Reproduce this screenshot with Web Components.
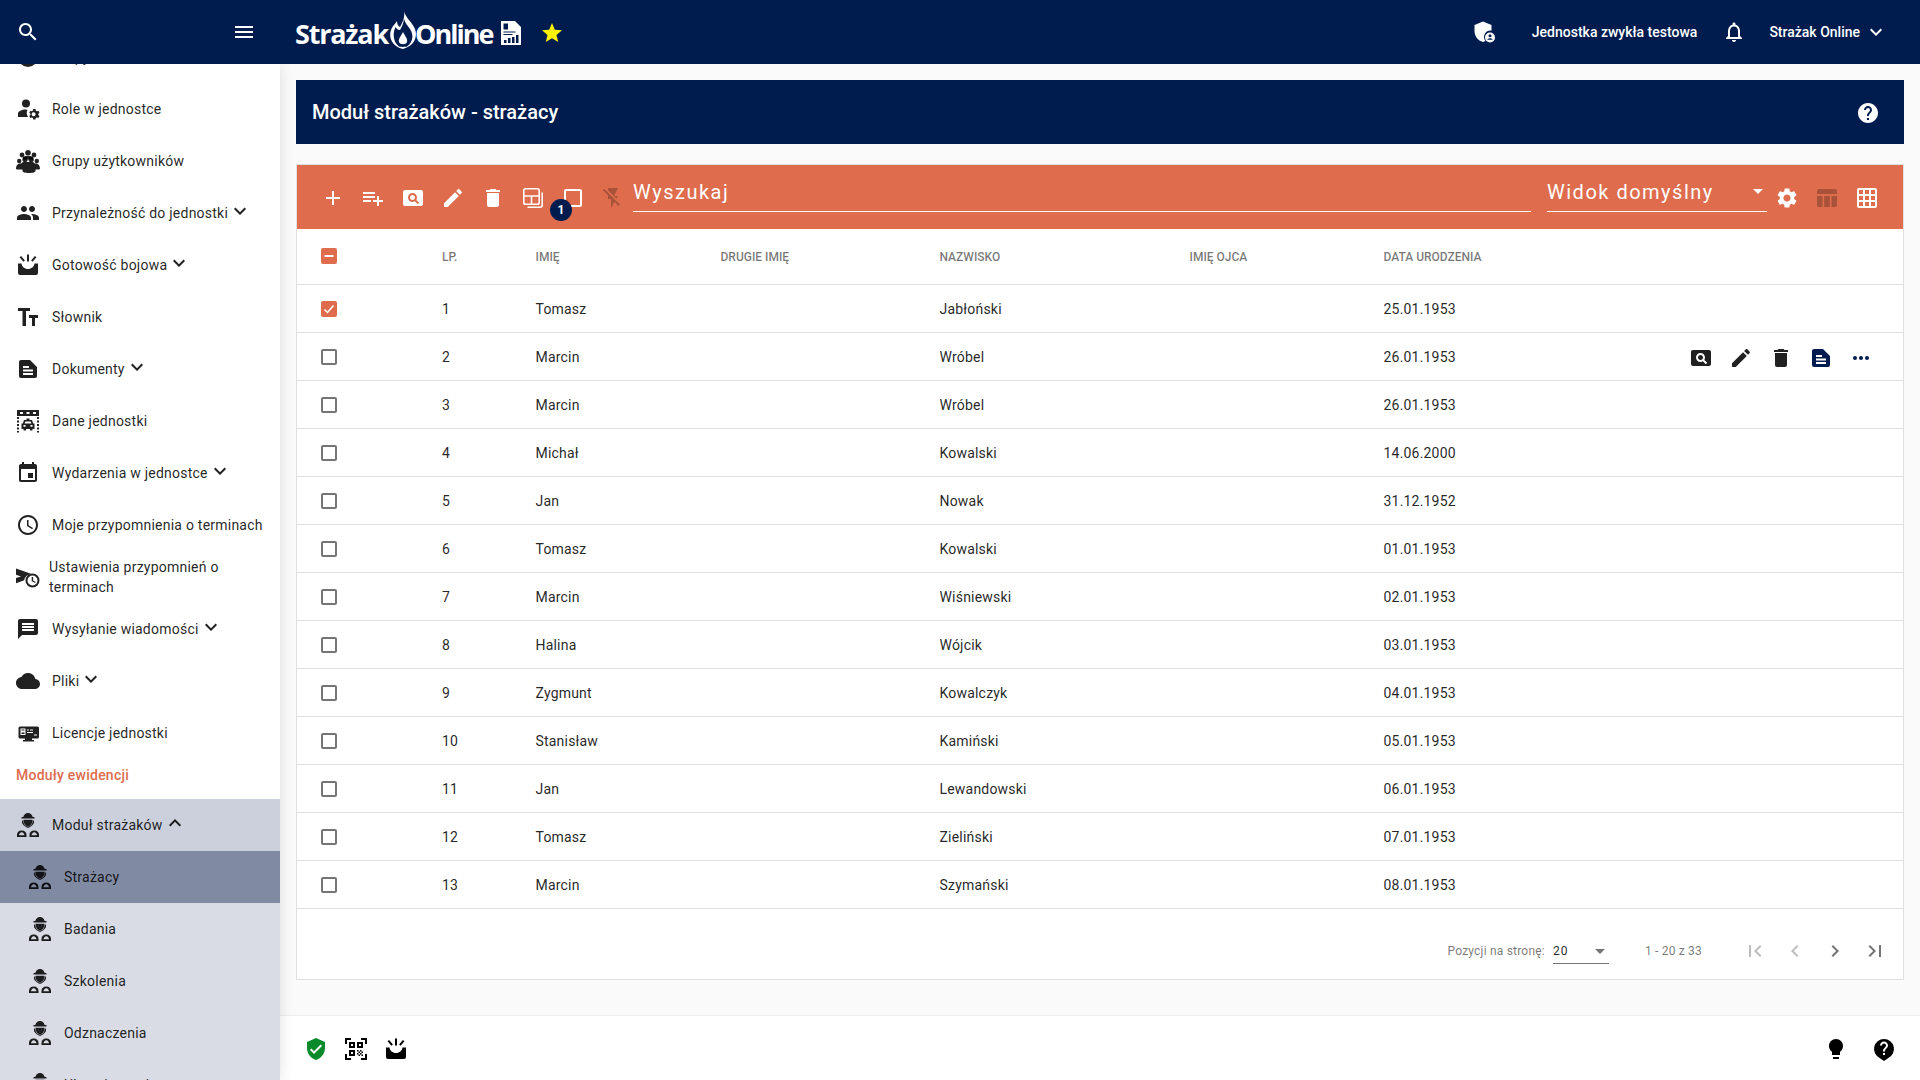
<!DOCTYPE html>
<html lang="pl">
<head>
<meta charset="utf-8">
<title>Strażak Online</title>
<style>
  html, body { margin: 0; height: 100%; }
  body { font-family: Roboto, "Liberation Sans", sans-serif; font-size: 14px; color: rgba(0, 0, 0, .87); overflow: hidden; }
</style>
</head>
<body>
<app-shell></app-shell>

<script>
/**
 * Icon shapes, all of them on a 24x24 grid.
 */
const ICONS = {
  search: '<path d="M15.5 14h-.79l-.28-.27C15.41 12.59 16 11.11 16 9.5 16 5.91 13.09 3 9.5 3S3 5.91 3 9.5 5.91 16 9.5 16c1.61 0 3.09-.59 4.23-1.57l.27.28v.79l5 4.99L20.49 19l-4.99-5zm-6 0C7.01 14 5 11.99 5 9.5S7.01 5 9.5 5 14 7.01 14 9.5 11.99 14 9.5 14z"/>',
  menu: '<path d="M3 18h18v-2H3v2zm0-5h18v-2H3v2zm0-7v2h18V6H3z"/>',
  star: '<path d="M12 17.27L18.18 21l-1.64-7.03L22 9.24l-7.19-.61L12 2 9.19 8.63 2 9.24l5.46 4.73L5.82 21z"/>',
  add: '<path d="M19 13h-6v6h-2v-6H5v-2h6V5h2v6h6v2z"/>',
  playlistAdd: '<path d="M14 10H2v2h12v-2zm0-4H2v2h12V6zm4 8v-4h-2v4h-4v2h4v4h2v-4h4v-2h-4zM2 16h8v-2H2v2z"/>',
  pageview: '<path d="M11.5 9C10.12 9 9 10.12 9 11.5s1.12 2.5 2.5 2.5 2.5-1.12 2.5-2.5S12.88 9 11.5 9zM20 4H4c-1.1 0-2 .9-2 2v12c0 1.1.9 2 2 2h16c1.1 0 2-.9 2-2V6c0-1.1-.9-2-2-2zm-3.21 14.21l-2.91-2.91c-.69.44-1.51.7-2.39.7C9.01 16 7 13.99 7 11.5S9.01 7 11.5 7 16 9.01 16 11.5c0 .88-.26 1.69-.7 2.39l2.91 2.9-1.42 1.42z"/>',
  edit: '<path d="M3 17.25V21h3.75L17.81 9.94l-3.75-3.75L3 17.25zM20.71 7.04c.39-.39.39-1.02 0-1.41l-2.34-2.34c-.39-.39-1.02-.39-1.41 0l-1.83 1.83 3.75 3.75 1.83-1.83z"/>',
  trash: '<path d="M6 19c0 1.1.9 2 2 2h8c1.1 0 2-.9 2-2V7H6v12zM19 4h-3.5l-1-1h-5l-1 1H5v2h14V4z"/>',
  panes: '<g fill="none" stroke="currentColor" stroke-width="1.6"><rect x="2.8" y="2.800" width="15.400" height="15.400" rx="1.800"/><path d="M2.800 10h15.400M10.500 10v8.200"/><path d="M21.200 6.500v13a1.800 1.800 0 0 1-1.800 1.800H6.500"/></g>',
  box: '<path d="M19 5v14H5V5h14m0-2H5c-1.100 0-2 .9-2 2v14c0 1.100.9 2 2 2h14c1.100 0 2-.9 2-2V5c0-1.100-.9-2-2-2z"/>',
  flashOff: '<path d="M3.270 3L2 4.270l5 5V13h3v9l3.580-6.140L17.730 20 19 18.730 3.270 3zM17 10h-4l4-8H7v2.180l8.460 8.460L17 10z"/>',
  gear: '<path d="M19.140 12.940c.04-.3.06-.61.06-.94 0-.32-.02-.64-.07-.94l2.030-1.580c.18-.14.23-.41.12-.61l-1.920-3.320c-.12-.22-.37-.29-.59-.22l-2.390.96c-.5-.38-1.030-.7-1.620-.94l-.36-2.540c-.04-.24-.24-.41-.48-.41h-3.840c-.24 0-.43.17-.47.41l-.36 2.540c-.59.24-1.130.57-1.620.94l-2.390-.96c-.22-.08-.47 0-.59.22L2.740 8.870c-.12.21-.08.47.12.61l2.030 1.580c-.05.3-.09.63-.09.94s.02.64.07.94l-2.030 1.580c-.18.14-.23.41-.12.61l1.920 3.320c.12.22.37.29.59.22l2.390-.96c.5.38 1.030.7 1.620.94l.36 2.540c.05.24.24.41.48.41h3.840c.24 0 .44-.17.47-.41l.36-2.540c.59-.24 1.130-.56 1.620-.94l2.390.96c.22.08.47 0 .59-.22l1.920-3.320c.12-.22.07-.47-.12-.61l-2.010-1.580zM12 15.600c-1.980 0-3.600-1.620-3.600-3.600s1.620-3.600 3.600-3.600 3.600 1.620 3.600 3.600-1.620 3.600-3.600 3.600z"/>',
  tableView: '<path d="M4 3h16a2 2 0 0 1 2 2v3H2V5a2 2 0 0 1 2-2zM2 10h5.500v11H4a2 2 0 0 1-2-2zM9.200 10h5.600v11H9.200zM16.500 10H22v9a2 2 0 0 1-2 2h-3.500z"/>',
  grid: '<path d="M20 2H4c-1.100 0-2 .9-2 2v16c0 1.100.9 2 2 2h16c1.100 0 2-.9 2-2V4c0-1.100-.9-2-2-2zM8 20H4v-4h4v4zm0-6H4v-4h4v4zm0-6H4V4h4v4zm6 12h-4v-4h4v4zm0-6h-4v-4h4v4zm0-6h-4V4h4v4zm6 12h-4v-4h4v4zm0-6h-4v-4h4v4zm0-6h-4V4h4v4z"/>',
  help: '<path d="M12 2C6.480 2 2 6.480 2 12s4.480 10 10 10 10-4.480 10-10S17.520 2 12 2zm1 17h-2v-2h2v2zm2.070-7.750l-.9.92C13.450 12.900 13 13.500 13 15h-2v-.5c0-1.100.45-2.100 1.170-2.830l1.240-1.260c.37-.36.59-.86.59-1.410 0-1.100-.9-2-2-2s-2 .9-2 2H8c0-2.210 1.790-4 4-4s4 1.790 4 4c0 .88-.36 1.680-.93 2.250z"/>',
  liveHelp: '<path fill-rule="evenodd" d="M12 2a10 10 0 0 0-4 19.170L12 24l4-2.830A10 10 0 0 0 12 2zm1 16h-2v-2h2zm2.070-7.250l-.9.92C13.450 12.400 13 13 13 14.500h-2V14c0-1.100.45-2.100 1.170-2.830l1.240-1.260c.37-.36.59-.86.59-1.410 0-1.100-.9-2-2-2s-2 .9-2 2H8c0-2.210 1.790-4 4-4s4 1.790 4 4c0 .88-.36 1.680-.93 2.250z"/>',
  bell: '<path d="M12 22c1.100 0 2-.9 2-2h-4c0 1.100.9 2 2 2zm6-6v-5c0-3.070-1.630-5.640-4.500-6.320V4c0-.83-.67-1.500-1.500-1.500s-1.500.67-1.500 1.500v.68C7.640 5.360 6 7.920 6 11v5l-2 2v1h16v-1l-2-2zm-2 1H8v-6c0-2.480 1.510-4.500 4-4.500s4 2.020 4 4.500v6z"/>',
  expandMore: '<path d="M16.590 8.590L12 13.170 7.410 8.590 6 10l6 6 6-6z"/>',
  expandLess: '<path d="M12 8l-6 6 1.410 1.410L12 10.830l4.590 4.580L18 14z"/>',
  doc: '<path fill-rule="evenodd" d="M14 3H5a2 2 0 0 0-2 2v14a2 2 0 0 0 2 2h14a2 2 0 0 0 2-2V10zM17 18H7v-2h10zM17 14.500H7v-2h10zM13 11H7V9h6z"/>',
  more: '<path d="M6 10c-1.100 0-2 .9-2 2s.9 2 2 2 2-.9 2-2-.9-2-2-2zm12 0c-1.100 0-2 .9-2 2s.9 2 2 2 2-.9 2-2-.9-2-2-2zm-6 0c-1.100 0-2 .9-2 2s.9 2 2 2 2-.9 2-2-.9-2-2-2z"/>',
  people: '<path d="M16 11c1.660 0 2.990-1.340 2.990-3S17.660 5 16 5c-1.660 0-3 1.340-3 3s1.340 3 3 3zm-8 0c1.660 0 2.990-1.340 2.990-3S9.660 5 8 5C6.340 5 5 6.340 5 8s1.340 3 3 3zm0 2c-2.330 0-7 1.170-7 3.500V19h14v-2.500c0-2.330-4.670-3.500-7-3.500zm8 0c-.29 0-.62.02-.97.05 1.160.84 1.970 1.970 1.970 3.450V19h6v-2.500c0-2.330-4.670-3.500-7-3.500z"/>',
  event: '<path d="M17 12h-5v5h5v-5zM16 1v2H8V1H6v2H5c-1.110 0-1.990.9-1.990 2L3 19c0 1.100.89 2 2 2h14c1.100 0 2-.9 2-2V5c0-1.100-.9-2-2-2h-1V1h-2zm3 18H5V8h14v11z"/>',
  schedule: '<path d="M11.990 2C6.470 2 2 6.480 2 12s4.470 10 9.990 10C17.520 22 22 17.520 22 12S17.520 2 11.990 2zM12 20c-4.420 0-8-3.580-8-8s3.580-8 8-8 8 3.580 8 8-3.580 8-8 8zm.5-13H11v6l5.250 3.150.75-1.230-4.500-2.670z"/>',
  message: '<path d="M20 2H4c-1.100 0-1.990.9-1.990 2L2 22l4-4h14c1.100 0 2-.9 2-2V4c0-1.100-.9-2-2-2zm-2 12H6v-2h12v2zm0-3H6V9h12v2zm0-3H6V6h12v2z"/>',
  cloud: '<path d="M19.350 10.040C18.670 6.590 15.640 4 12 4 9.110 4 6.600 5.640 5.350 8.040 2.340 8.360 0 10.910 0 14c0 3.310 2.690 6 6 6h13c2.760 0 5-2.240 5-5 0-2.640-2.050-4.780-4.650-4.960z"/>',
  textFields: '<path d="M2 3v3h4.500v15h3.500V6h4V3zM13 10v3h3v8h3v-8h3v-3z"/>',
  bulb: '<path d="M9 20h6v2H9zM12 2C8.140 2 5 5.140 5 9c0 2.380 1.190 4.470 3 5.740V18h8v-3.260c1.810-1.270 3-3.360 3-5.740 0-3.860-3.140-7-7-7z"/>',
  first: '<path d="M18.410 16.590L13.820 12l4.590-4.590L17 6l-6 6 6 6zM6 6h2v12H6z"/>',
  last: '<path d="M5.590 7.410L10.180 12l-4.590 4.590L7 18l6-6-6-6zM16 6h2v12h-2z"/>',
  prev: '<path d="M15.410 7.410L14 6l-6 6 6 6 1.410-1.410L10.830 12z"/>',
  next: '<path d="M10 6L8.590 7.410 13.170 12l-4.580 4.590L10 18l6-6z"/>',
  verified: '<path d="M12 1L3 5v6c0 5.550 3.840 10.740 9 12 5.160-1.260 9-6.450 9-12V5l-9-4zm-2 16l-4-4 1.410-1.410L10 14.170l6.590-6.590L18 9l-8 8z"/>',
  shieldUser: '<path d="M11 1.500L2.500 5v6c0 5 3.400 9.700 8.500 11 .9-.2 1.700-.6 2.500-1a6.500 6.500 0 0 1 6-10.500V5z"/><path fill-rule="evenodd" d="M18 12.500a5 5 0 1 0 0 10 5 5 0 0 0 0-10zm0 1.800a1.500 1.500 0 1 1 0 3 1.500 1.500 0 0 1 0-3zm-2.700 5.500c.4-1 1.500-1.500 2.700-1.500s2.300.5 2.700 1.500z"/>',
  role: '<circle cx="10" cy="6.500" r="4"/><path d="M9.500 12.500C6 12.500 2 14.200 2 16.800V20h10.200a7 7 0 0 1-.7-7.300z"/><path fill-rule="evenodd" d="M22.300 16.700l1.200-1-1.200-2-1.400.6-1.200-.7-.2-1.500h-2.300l-.2 1.500-1.200.7-1.400-.6-1.200 2 1.200 1v1.300l-1.200 1 1.200 2 1.400-.6 1.200.7.2 1.500h2.300l.2-1.500 1.200-.7 1.400.6 1.200-2-1.200-1zM17.600 19.300a2 2 0 1 1 0-4 2 2 0 0 1 0 4z"/>',
  groups: '<circle cx="12" cy="3.800" r="2.800"/><circle cx="6" cy="6" r="2.400"/><circle cx="18" cy="6" r="2.400"/><circle cx="9" cy="10.400" r="2.600"/><circle cx="15.200" cy="10.400" r="2.600"/><circle cx="3.200" cy="12" r="2.200"/><circle cx="20.800" cy="12" r="2.200"/><path d="M7 8.500c.5-1 1.300-1.500 5-1.500s4.500.5 5 1.500v2H7zM0 20c0-3.500 1.500-5.500 5-5.500l2-1.500h10l2 1.500c3.500 0 5 2 5 5.500l-1 .5h-3.500V22c0 1-2 2-6.500 2s-6.500-1-6.500-2v-1.500H1z"/>',
  siren: '<path d="M11 1.500h2v7h-2zM3.600 4.200l1.500-1.300 3.800 4.600-1.500 1.300zM20.400 4.200l-1.500-1.300-3.800 4.600 1.500 1.300zM2 10.500h3.500c.3 3 3.100 5.500 6.500 5.500s6.200-2.500 6.500-5.500H22V20a2 2 0 0 1-2 2H4a2 2 0 0 1-2-2z"/>',
  station: '<path fill-rule="evenodd" d="M1 1h22v6H1zM4 3v2h3V3zM10.500 3v2h3V3zM17 3v2h3V3z"/><path d="M1 8h2v2H1zM1 11.500h2v2H1zM1 15h2v2H1zM1 18.500h2v2H1zM1 22h2v1.500H1zM21 8h2v2h-2zM21 11.500h2v2h-2zM21 15h2v2h-2zM21 18.500h2v2h-2zM21 22h2v1.500h-2z"/><path fill-rule="evenodd" d="M10.500 9.500h3V11H16l1.200 3.500h1.300v5.500h-2v1.500h-2.500V20h-4v1.500H7.500V20h-2v-5.500h1.300L8 11h2.500zM9.300 12.500l-.7 2h6.800l-.7-2zM7.500 16v1.800h2V16zM14.500 16v1.800h2V16z"/>',
  bullhorn: '<path d="M0 3.500l15 5.200-4.300 2a7.500 7.500 0 0 0-2.500 4.500l-8.200 3V13l5-1.500-5-1.800z"/><path fill-rule="evenodd" d="M16.500 8.500a7 7 0 1 0 0 14 7 7 0 0 0 0-14zm0 2a5 5 0 1 1 0 10 5 5 0 0 1 0-10z"/><path d="M15.700 12h1.400v3.400l2.600 1.500-.7 1.200-3.300-2z"/>',
  monitor: '<path d="M4 5.500h17.500a1.500 1.500 0 0 1 1.500 1.500v9a1.500 1.500 0 0 1-1.500 1.500H16V19h2v1.500H7V19h2v-1.500H4A1.500 1.500 0 0 1 2.500 16V7A1.500 1.500 0 0 1 4 5.500z"/><path fill="#fff" d="M4.500 7.500h5v6.500h-5zM11 8.500h2v1h-2zM14 8.500h3v1h-3zM11 11h6v1h-6zM18 13.500h3v1h-3z"/><path d="M5.500 8.500h3v1h-3zM5.500 11.500h3v1.500h-3z"/>',
  firefighter: '<path d="M12 0C9.500 0 7.800 1.800 7.300 4H5.500v1.600h13V4h-1.800C16.200 1.800 14.500 0 12 0z"/><path d="M7.500 6.800h9c.2 3.400-1.800 6.400-4.500 6.400S7.300 10.200 7.500 6.800z"/><path d="M6.200 7.500c-.6 1.800-.2 3.200 1 4.200.8.800 1.800 1.600 2.800 2.400l2 1 2-1c1-.8 2-1.600 2.800-2.400 1.200-1 1.600-2.400 1-4.200h-1c.2 2.600-1.800 6-4.800 6s-5-3.400-4.800-6z"/><path fill-rule="evenodd" d="M1 24v-2c0-2.800 1.800-4.500 4.700-4.500s4.800 1.700 4.800 4.500v2zm2-1.800h5.500c-.3-1.500-1.300-2.900-2.800-2.900s-2.400 1.400-2.700 2.900zM13.500 24v-2c0-2.800 1.900-4.500 4.800-4.500s4.700 1.700 4.700 4.500v2zm2-1.800H21c-.3-1.500-1.200-2.900-2.700-2.900s-2.500 1.400-2.800 2.900z"/>',
  qr: '<path d="M1 1h6v2H3v4H1zM17 1h6v6h-2V3h-4zM1 17h2v4h4v2H1zM21 17h2v6h-6v-2h4z"/><path fill-rule="evenodd" d="M5 5h6v6H5zM7 7v2h2V7zM13 5h6v6h-6zM15 7v2h2V7zM5 13h6v6H5zM7 15v2h2v-2z"/><path d="M13 13h1.500v1.500H13zM16 13h1.500v1.500H16zM14.500 14.500H16V16h-1.500zM17.500 14.500H19V16h-1.500zM13 16h1.500v1.500H13zM16 16h1.500v1.500H16zM14.500 17.500H16V19h-1.500zM17.500 17.500H19V19h-1.500z"/>',
  circle: '<circle cx="12" cy="12" r="10"/>',
  report: '<path fill-rule="evenodd" d="M2 0h14l6 6v18H2zM4.500 2.500v6h4.500v-6zM4.500 10.500v1h12v-1zM4.500 13v1h9v-1zM5 22h2.500v-3H5zM9 22h2.500v-5H9zM13 22h2.500v-6H13zM17 22h2.500v-8H17z"/>'
}

const iconTemplate = document.createElement('template')
iconTemplate.innerHTML = `
<style>
  :host { display: inline-flex; flex: none; width: var(--size, 24px); height: var(--size, 24px); }
  svg { width: 100%; height: 100%; fill: currentColor; display: block; }
</style>
<svg viewBox="0 0 24 24" aria-hidden="true"></svg>
`

customElements.define('ui-icon',
  /**
   * One inline svg icon, picked by its name attribute.
   */
  class extends HTMLElement {
    static get observedAttributes () {
      return ['name']
    }

    constructor () {
      super()
      this.attachShadow({ mode: 'open' }).appendChild(iconTemplate.content.cloneNode(true))
    }

    attributeChangedCallback (attr, before, name) {
      this.shadowRoot.querySelector('svg').innerHTML = ICONS[name] || ''
    }
  }
)

const topBarTemplate = document.createElement('template')
topBarTemplate.innerHTML = `
<style>
  :host { display: flex; align-items: center; height: 64px; background: #001c4f; color: #fff; position: relative; z-index: 2; }
  .left { width: 280px; flex: none; box-sizing: border-box; display: flex; justify-content: space-between; padding: 0 24px 0 16px; }
  .logo { display: flex; align-items: center; margin-left: 15px; padding-top: 2px; font: 700 27px/1 "Open Sans", Roboto, sans-serif; letter-spacing: -1.2px; }
  .flame { width: 30px; height: 38px; flex: none; margin: -7px -3px 0 0; fill: #fff; }
  .online { letter-spacing: -2px; }
  .report { margin-left: 7px; }
  .star { color: #fff200; margin-left: 17px; }
  .right { margin-left: auto; display: flex; align-items: center; font-weight: 500; font-size: 14px; padding-right: 32px; }
  .unit { margin-left: 36px; }
  .bell { margin: 0 23px 0 25px; }
  .chev { margin-left: 4px; }
</style>
<div class="left">
  <ui-icon name="search"></ui-icon>
  <ui-icon name="menu"></ui-icon>
</div>
<div class="logo">
  <span>Strażak</span>
  <svg class="flame" viewBox="0 0 30 38" aria-hidden="true">
    <path fill-rule="evenodd" d="M16 0C17 6 24 11 27 18C30 26 26 35 15 38C5 36 0 27 3 19C5 14 8 12 9 10C9 13 10 15 12 16C15 11 17 6 16 0zM16 8C15.500 12 14 16 12 19c-2 0-3.500-1-4.500-3C4.500 22 5 31 11 35.500c1 .5 7 .5 8 0C25 31 26 24 22 18C20 15 17 12 16 8zM15 21C13 25 10 28 11 31C12 34 18 34 19 31C20 28 17 25 15 21z"/>
  </svg>
  <span class="online">Online</span>
  <ui-icon class="report" name="report"></ui-icon>
  <ui-icon class="star" name="star"></ui-icon>
</div>
<div class="right">
  <ui-icon name="shieldUser"></ui-icon>
  <span class="unit">Jednostka zwykła testowa</span>
  <ui-icon class="bell" name="bell"></ui-icon>
  <span>Strażak Online</span>
  <ui-icon class="chev" name="expandMore"></ui-icon>
</div>
`

customElements.define('top-bar',
  /**
   * The navy bar over the whole width of the page.
   */
  class extends HTMLElement {
    constructor () {
      super()
      this.attachShadow({ mode: 'open' }).appendChild(topBarTemplate.content.cloneNode(true))
    }
  }
)

const navItemTemplate = document.createElement('template')
navItemTemplate.innerHTML = `
<style>
  :host { display: flex; align-items: center; height: 52px; padding-left: 16px; box-sizing: border-box; font-size: 14px; line-height: 20px; letter-spacing: .23px; color: rgba(0, 0, 0, .87); background: var(--item-bg, transparent); }
  :host([sub]) { padding-left: 28px; }
  .label { margin-left: 12px; }
  :host([tight]) .label { margin-left: 9px; width: 200px; }
  .chev { display: none; margin-top: -4px; }
  :host([open]) .chev, :host([closed]) .chev { display: inline-flex; }
</style>
<ui-icon class="icon"></ui-icon>
<span class="label"><slot></slot></span>
<ui-icon class="chev"></ui-icon>
`

customElements.define('nav-item',
  /**
   * One row of the side menu, with an optional chevron.
   */
  class extends HTMLElement {
    constructor () {
      super()
      this.attachShadow({ mode: 'open' }).appendChild(navItemTemplate.content.cloneNode(true))
    }

    connectedCallback () {
      this.shadowRoot.querySelector('.icon').setAttribute('name', this.getAttribute('icon'))
      this.shadowRoot.querySelector('.chev').setAttribute('name', this.hasAttribute('open') ? 'expandLess' : 'expandMore')
    }
  }
)

const sideNavTemplate = document.createElement('template')
sideNavTemplate.innerHTML = `
<style>
  :host { display: block; width: 280px; overflow: hidden; background: #fff; box-shadow: 0 0 14px rgba(0, 0, 0, .12); position: relative; z-index: 1; }
  .list { margin-top: -33px; }
  .section { height: 40px; padding: 6px 0 0 16px; box-sizing: border-box; font-weight: 500; line-height: 20px; letter-spacing: .23px; color: #de6c4d; }
  .parent { --item-bg: #ccd0dc; }
  .child { --item-bg: #d9dce4; }
  .active { --item-bg: #808ba3; }
</style>
<div class="list">
  <nav-item icon="circle">Grupy</nav-item>
  <nav-item icon="role">Role w jednostce</nav-item>
  <nav-item icon="groups">Grupy użytkowników</nav-item>
  <nav-item icon="people" closed>Przynależność do jednostki</nav-item>
  <nav-item icon="siren" closed>Gotowość bojowa</nav-item>
  <nav-item icon="textFields">Słownik</nav-item>
  <nav-item icon="doc" closed>Dokumenty</nav-item>
  <nav-item icon="station">Dane jednostki</nav-item>
  <nav-item icon="event" closed>Wydarzenia w jednostce</nav-item>
  <nav-item icon="schedule">Moje przypomnienia o terminach</nav-item>
  <nav-item icon="bullhorn" tight>Ustawienia przypomnień o terminach</nav-item>
  <nav-item icon="message" closed>Wysyłanie wiadomości</nav-item>
  <nav-item icon="cloud" closed>Pliki</nav-item>
  <nav-item icon="monitor">Licencje jednostki</nav-item>
  <div class="section">Moduły ewidencji</div>
  <nav-item class="parent" icon="firefighter" open>Moduł strażaków</nav-item>
  <nav-item class="active" icon="firefighter" sub>Strażacy</nav-item>
  <nav-item class="child" icon="firefighter" sub>Badania</nav-item>
  <nav-item class="child" icon="firefighter" sub>Szkolenia</nav-item>
  <nav-item class="child" icon="firefighter" sub>Odznaczenia</nav-item>
  <nav-item class="child" icon="firefighter" sub>Ubezpieczenia</nav-item>
</div>
`

customElements.define('side-nav',
  /**
   * The side menu. It is scrolled a little, the first row sits under the top bar.
   */
  class extends HTMLElement {
    constructor () {
      super()
      this.attachShadow({ mode: 'open' }).appendChild(sideNavTemplate.content.cloneNode(true))
    }
  }
)

const pageTitleTemplate = document.createElement('template')
pageTitleTemplate.innerHTML = `
<style>
  :host { display: flex; align-items: center; justify-content: space-between; height: 64px; padding: 0 24px 0 16px; background: #001c4f; color: #fff; font-size: 20px; font-weight: 500; }
  ui-icon { margin-top: 1px; }
</style>
<span><slot></slot></span>
<ui-icon name="help"></ui-icon>
`

customElements.define('page-title',
  /**
   * The navy banner with the name of the view.
   */
  class extends HTMLElement {
    constructor () {
      super()
      this.attachShadow({ mode: 'open' }).appendChild(pageTitleTemplate.content.cloneNode(true))
    }
  }
)

const toolBarTemplate = document.createElement('template')
toolBarTemplate.innerHTML = `
<style>
  :host { display: flex; align-items: center; height: 64px; box-sizing: border-box; padding: 2px 16px 0; background: #de6c4d; color: #fff; }
  .btn { width: 40px; height: 40px; display: flex; align-items: center; justify-content: center; flex: none; position: relative; }
  .dim { color: #a8523a; }
  .badge { position: absolute; left: -3px; top: 21px; width: 22px; height: 22px; border-radius: 50%; background: #001c4f; color: #fff; font-size: 12px; font-weight: 700; line-height: 22px; text-align: center; }
  .field { height: 47px; margin-top: -19px; padding-top: 7px; box-sizing: border-box; border-bottom: 1px solid #fff; font-size: 20px; line-height: 40px; letter-spacing: 1.500px; position: relative; }
  .search { flex: 1; margin-left: 0; }
  .view { width: 220px; margin-left: 16px; flex: none; }
  .arrow { position: absolute; right: 4px; top: 24px; border: 5px solid transparent; border-top-color: #fff; border-bottom: 0; }
</style>
<div class="btn"><ui-icon name="add"></ui-icon></div>
<div class="btn"><ui-icon name="playlistAdd"></ui-icon></div>
<div class="btn"><ui-icon name="pageview"></ui-icon></div>
<div class="btn"><ui-icon name="edit"></ui-icon></div>
<div class="btn"><ui-icon name="trash"></ui-icon></div>
<div class="btn"><ui-icon name="panes"></ui-icon></div>
<div class="btn"><ui-icon name="box"></ui-icon><span class="badge">1</span></div>
<div class="btn dim"><ui-icon name="flashOff"></ui-icon></div>
<div class="field search">Wyszukaj</div>
<div class="field view">Widok domyślny<span class="arrow"></span></div>
<div class="btn"><ui-icon name="gear"></ui-icon></div>
<div class="btn dim"><ui-icon name="tableView"></ui-icon></div>
<div class="btn"><ui-icon name="grid"></ui-icon></div>
`

customElements.define('tool-bar',
  /**
   * The orange action bar of the table, with search and view picker.
   */
  class extends HTMLElement {
    constructor () {
      super()
      this.attachShadow({ mode: 'open' }).appendChild(toolBarTemplate.content.cloneNode(true))
    }
  }
)

const checkTemplate = document.createElement('template')
checkTemplate.innerHTML = `
<style>
  :host { display: block; width: 16px; height: 16px; box-sizing: border-box; border: 2px solid #757575; border-radius: 2px; position: relative; }
  :host([state]) { border: 0; background: #de6c4d; }
  svg { display: none; width: 16px; height: 16px; fill: none; stroke: #fff; stroke-width: 1.500; }
  :host([state]) svg { display: block; }
</style>
<svg viewBox="0 0 16 16" aria-hidden="true"><path></path></svg>
`

customElements.define('check-mark',
  /**
   * A checkbox drawing: empty, ticked or partly ticked.
   */
  class extends HTMLElement {
    constructor () {
      super()
      this.attachShadow({ mode: 'open' }).appendChild(checkTemplate.content.cloneNode(true))
    }

    connectedCallback () {
      const state = this.getAttribute('state')
      if (state === 'on') this.shadowRoot.querySelector('path').setAttribute('d', 'M3.500 8.500l3 3 6-7')
      if (state === 'some') {
        const path = this.shadowRoot.querySelector('path')
        path.setAttribute('d', 'M3.500 8h9')
        path.setAttribute('stroke-width', '2')
      }
    }
  }
)

const rowTemplate = document.createElement('template')
rowTemplate.innerHTML = `
<style>
  :host { display: grid; grid-template-columns: 145px 93.500px 185px 219px 250px 194px 200px 1fr; align-items: center; height: 48px; box-sizing: border-box; border-bottom: 1px solid #e0e0e0; font-size: 14px; letter-spacing: .2px; color: rgba(0, 0, 0, .87); }
  :host([head]) { height: 56px; font-size: 12px; font-weight: 500; letter-spacing: 0; color: rgba(0, 0, 0, .54); }
  check-mark { margin-left: 24px; }
  :host([head]) check-mark { margin-top: -2px; }
  .actions { grid-column: 8; margin-top: 2px; display: flex; justify-content: flex-end; padding-right: 22px; color: #212121; }
  .btn { width: 40px; height: 40px; display: flex; align-items: center; justify-content: center; }
  .navy { color: #001c4f; }
</style>
`

customElements.define('table-row',
  /**
   * One row of the list. Cells come from the cells attribute, split by a bar.
   */
  class extends HTMLElement {
    constructor () {
      super()
      this.attachShadow({ mode: 'open' }).appendChild(rowTemplate.content.cloneNode(true))
    }

    connectedCallback () {
      const root = this.shadowRoot
      const check = document.createElement('check-mark')
      if (this.hasAttribute('state')) check.setAttribute('state', this.getAttribute('state'))
      root.append(check)

      for (const value of this.getAttribute('cells').split('|')) {
        const cell = document.createElement('span')
        cell.textContent = value
        root.append(cell)
      }

      if (this.hasAttribute('actions')) {
        const actions = document.createElement('div')
        actions.className = 'actions'
        const icons = [['pageview', ''], ['edit', ''], ['trash', ''], ['doc', 'navy'], ['more', 'navy']]
        actions.innerHTML = icons.map(([name, cls]) => `<div class="btn ${cls}"><ui-icon name="${name}"></ui-icon></div>`).join('')
        root.append(actions)
      }
    }
  }
)

const pagerTemplate = document.createElement('template')
pagerTemplate.innerHTML = `
<style>
  :host { display: flex; align-items: center; height: 70px; box-sizing: border-box; padding: 14px 8px 0 0; justify-content: flex-end; font-size: 12px; letter-spacing: .2px; color: rgba(0, 0, 0, .54); }
  .select { width: 56px; height: 25px; margin: 0 36px 0 8px; box-sizing: border-box; border-bottom: 1px solid #757575; color: rgba(0, 0, 0, .87); line-height: 24px; letter-spacing: 1px; position: relative; }
  .arrow { position: absolute; right: 4px; top: 10px; border: 5px solid transparent; border-top-color: #757575; border-bottom: 0; }
  .count { margin-right: 33px; }
  .btn { width: 40px; height: 40px; display: flex; align-items: center; justify-content: center; color: #757575; }
  .off { color: #bdbdbd; }
</style>
<span>Pozycji na stronę:</span>
<div class="select">20<span class="arrow"></span></div>
<span class="count">1 - 20 z 33</span>
<div class="btn off"><ui-icon name="first"></ui-icon></div>
<div class="btn off"><ui-icon name="prev"></ui-icon></div>
<div class="btn"><ui-icon name="next"></ui-icon></div>
<div class="btn"><ui-icon name="last"></ui-icon></div>
`

customElements.define('table-pager',
  /**
   * The paging controls below the rows.
   */
  class extends HTMLElement {
    constructor () {
      super()
      this.attachShadow({ mode: 'open' }).appendChild(pagerTemplate.content.cloneNode(true))
    }
  }
)

const PEOPLE = [
  ['Tomasz', 'Jabłoński', '25.01.1953'],
  ['Marcin', 'Wróbel', '26.01.1953'],
  ['Marcin', 'Wróbel', '26.01.1953'],
  ['Michał', 'Kowalski', '14.06.2000'],
  ['Jan', 'Nowak', '31.12.1952'],
  ['Tomasz', 'Kowalski', '01.01.1953'],
  ['Marcin', 'Wiśniewski', '02.01.1953'],
  ['Halina', 'Wójcik', '03.01.1953'],
  ['Zygmunt', 'Kowalczyk', '04.01.1953'],
  ['Stanisław', 'Kamiński', '05.01.1953'],
  ['Jan', 'Lewandowski', '06.01.1953'],
  ['Tomasz', 'Zieliński', '07.01.1953'],
  ['Marcin', 'Szymański', '08.01.1953']
]

const dataTableTemplate = document.createElement('template')
dataTableTemplate.innerHTML = `
<style>
  :host { display: block; margin-top: 20px; background: #fff; border: 1px solid #e0e0e0; }
</style>
<tool-bar></tool-bar>
<table-row head state="some" cells="LP.|IMIĘ|DRUGIE IMIĘ|NAZWISKO|IMIĘ OJCA|DATA URODZENIA"></table-row>
<div id="rows"></div>
<table-pager></table-pager>
`

customElements.define('data-table',
  /**
   * The card with the toolbar, the firefighters and the pager.
   */
  class extends HTMLElement {
    constructor () {
      super()
      this.attachShadow({ mode: 'open' }).appendChild(dataTableTemplate.content.cloneNode(true))
    }

    connectedCallback () {
      const rows = this.shadowRoot.querySelector('#rows')
      PEOPLE.forEach(([first, last, born], index) => {
        const row = document.createElement('table-row')
        row.setAttribute('cells', `${index + 1}|${first}||${last}||${born}`)
        if (index === 0) row.setAttribute('state', 'on')
        if (index === 1) row.setAttribute('actions', '')
        rows.append(row)
      })
    }
  }
)

const footBarTemplate = document.createElement('template')
footBarTemplate.innerHTML = `
<style>
  :host { display: flex; align-items: center; height: 65px; box-sizing: border-box; padding: 2px 16px 0; background: #fff; border-top: 1px solid #eee; color: #000; }
  .btn { width: 40px; height: 40px; display: flex; align-items: center; justify-content: center; }
  .green { color: #0a8a2a; }
  .gap { flex: 1; }
  .bulb { margin-right: 8px; }
</style>
<div class="btn green"><ui-icon name="verified"></ui-icon></div>
<div class="btn"><ui-icon name="qr"></ui-icon></div>
<div class="btn"><ui-icon name="siren"></ui-icon></div>
<div class="gap"></div>
<div class="btn bulb"><ui-icon name="bulb"></ui-icon></div>
<div class="btn"><ui-icon name="liveHelp"></ui-icon></div>
`

customElements.define('foot-bar',
  /**
   * The white strip at the bottom with the shortcuts.
   */
  class extends HTMLElement {
    constructor () {
      super()
      this.attachShadow({ mode: 'open' }).appendChild(footBarTemplate.content.cloneNode(true))
    }
  }
)

const shellTemplate = document.createElement('template')
shellTemplate.innerHTML = `
<style>
  :host { display: grid; grid-template: 64px 1fr / 280px 1fr; height: 100vh; background: #fafafa; overflow: hidden; }
  top-bar { grid-column: 1 / 3; }
  main { display: flex; flex-direction: column; min-width: 0; min-height: 0; }
  .content { flex: 1; padding: 16px 16px 0; min-height: 0; }
</style>
<top-bar></top-bar>
<side-nav></side-nav>
<main>
  <div class="content">
    <page-title>Moduł strażaków - strażacy</page-title>
    <data-table></data-table>
  </div>
  <foot-bar></foot-bar>
</main>
`

customElements.define('app-shell',
  /**
   * The page frame: top bar, side menu and the main column.
   */
  class extends HTMLElement {
    constructor () {
      super()
      this.attachShadow({ mode: 'open' }).appendChild(shellTemplate.content.cloneNode(true))
    }
  }
)
</script>
</body>
</html>
